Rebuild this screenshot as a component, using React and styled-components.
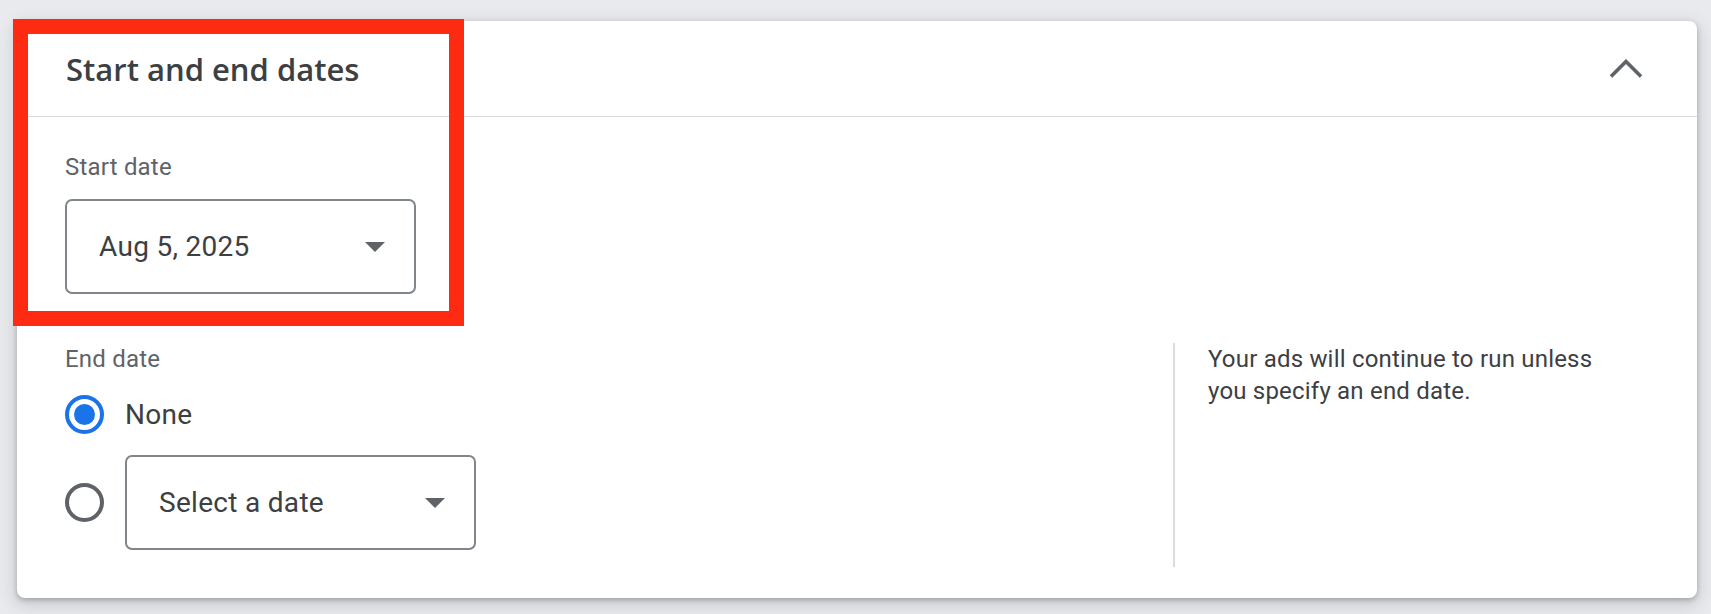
import React from 'react'
import styled, { createGlobalStyle } from 'styled-components'

const GlobalStyle = createGlobalStyle`
  html, body {
    margin: 0;
    padding: 0;
    background: #e8eaed;
  }
  body {
    font-family: Roboto, "Liberation Sans", Arial, sans-serif;
    color: #3c4043;
  }
  * {
    box-sizing: border-box;
  }
`

const ChevronUp = () => (
  <svg width="34" height="20" viewBox="0 0 34 20" fill="none">
    <polyline
      points="2,17.5 17,2.5 32,17.5"
      stroke="#5f6368"
      strokeWidth="3.6"
      strokeLinecap="butt"
      strokeLinejoin="miter"
    />
  </svg>
)

const Caret = () => (
  <svg width="20" height="10" viewBox="0 0 20 10" fill="#5f6368">
    <path d="M0 0h20L10 10z" />
  </svg>
)

const DateSelect = ({ value }) => (
  <Select>
    <SelectValue>{value}</SelectValue>
    <Caret />
  </Select>
)

const App = () => {
  return (
    <Page>
      <GlobalStyle />
      <Card>
        <Header>
          <Title>Start and end dates</Title>
          <CollapseButton>
            <ChevronUp />
          </CollapseButton>
        </Header>

        <Body>
          <Field>
            <Label>Start date</Label>
            <DateSelect value="Aug 5, 2025" />
          </Field>

          <EndRow>
            <EndColumn>
              <Label>End date</Label>
              <Options>
                <Option>
                  <Radio checked />
                  <OptionText>None</OptionText>
                </Option>
                <Option>
                  <Radio />
                  <DateSelect value="Select a date" />
                </Option>
              </Options>
            </EndColumn>
            <Aside>
              Your ads will continue to run unless you specify an end date.
            </Aside>
          </EndRow>
        </Body>
      </Card>
      <Highlight />
    </Page>
  )
}

export default App

const Page = styled.div`
  position: relative;
  padding: 21px 14px 16px 17px;
`

const Card = styled.div`
  background: #fff;
  border-radius: 8px;
  box-shadow: 0 2px 5px rgba(60, 64, 67, 0.32), 0 5px 16px 3px rgba(60, 64, 67, 0.16);
  overflow: hidden;
`

const Header = styled.div`
  height: 96px;
  display: flex;
  align-items: center;
  justify-content: space-between;
  padding: 0 54px 0 49px;
  border-bottom: 1px solid #dadce0;
`

const Title = styled.h2`
  margin: 0;
  font-family: "Open Sans", Roboto, sans-serif;
  font-size: 31px;
  font-weight: 600;
  color: #3c4043;
`

const CollapseButton = styled.div`
  display: flex;
  align-items: center;
  justify-content: center;
  cursor: pointer;
`

const Body = styled.div`
  padding: 34px 48px 31px 48px;
`

const Field = styled.div`
  display: flex;
  flex-direction: column;
  align-items: flex-start;
  gap: 16px;
`

const Label = styled.div`
  font-size: 24px;
  line-height: 32px;
  color: #5f6368;
  letter-spacing: 0.2px;
`

const Select = styled.div`
  width: 351px;
  height: 95px;
  border: 2px solid #80868b;
  border-radius: 7px;
  display: flex;
  align-items: center;
  justify-content: space-between;
  padding: 0 29px 0 32px;
  cursor: pointer;
`

const SelectValue = styled.span`
  font-size: 28px;
  color: #3c4043;
  letter-spacing: 0.3px;
`

const EndRow = styled.div`
  display: flex;
  margin-top: 49px;
`

const EndColumn = styled.div`
  flex: 1;
  display: flex;
  flex-direction: column;
  padding-bottom: 17px;
`

const Options = styled.div`
  display: flex;
  flex-direction: column;
  gap: 21px;
  margin-top: 20px;
`

const Option = styled.div`
  display: flex;
  align-items: center;
  gap: 21px;
`

const Radio = styled.span`
  width: 39px;
  height: 39px;
  border-radius: 50%;
  border: 4px solid ${p => (p.checked ? '#1a73e8' : '#5f6368')};
  display: flex;
  align-items: center;
  justify-content: center;
  flex-shrink: 0;

  &::after {
    content: '';
    width: 21px;
    height: 21px;
    border-radius: 50%;
    background: ${p => (p.checked ? '#1a73e8' : 'transparent')};
  }
`

const OptionText = styled.span`
  font-size: 28px;
  color: #3c4043;
  letter-spacing: 0.3px;
`

const Aside = styled.div`
  flex: 0 0 476px;
  border-left: 2px solid #dadce0;
  padding: 0 41px 0 33px;
  font-size: 24px;
  line-height: 32px;
  color: #3c4043;
  letter-spacing: 0.2px;
`

const Highlight = styled.div`
  position: absolute;
  left: 13px;
  top: 19px;
  width: 451px;
  height: 307px;
  border: 15px solid #ff2a12;
  pointer-events: none;
`
